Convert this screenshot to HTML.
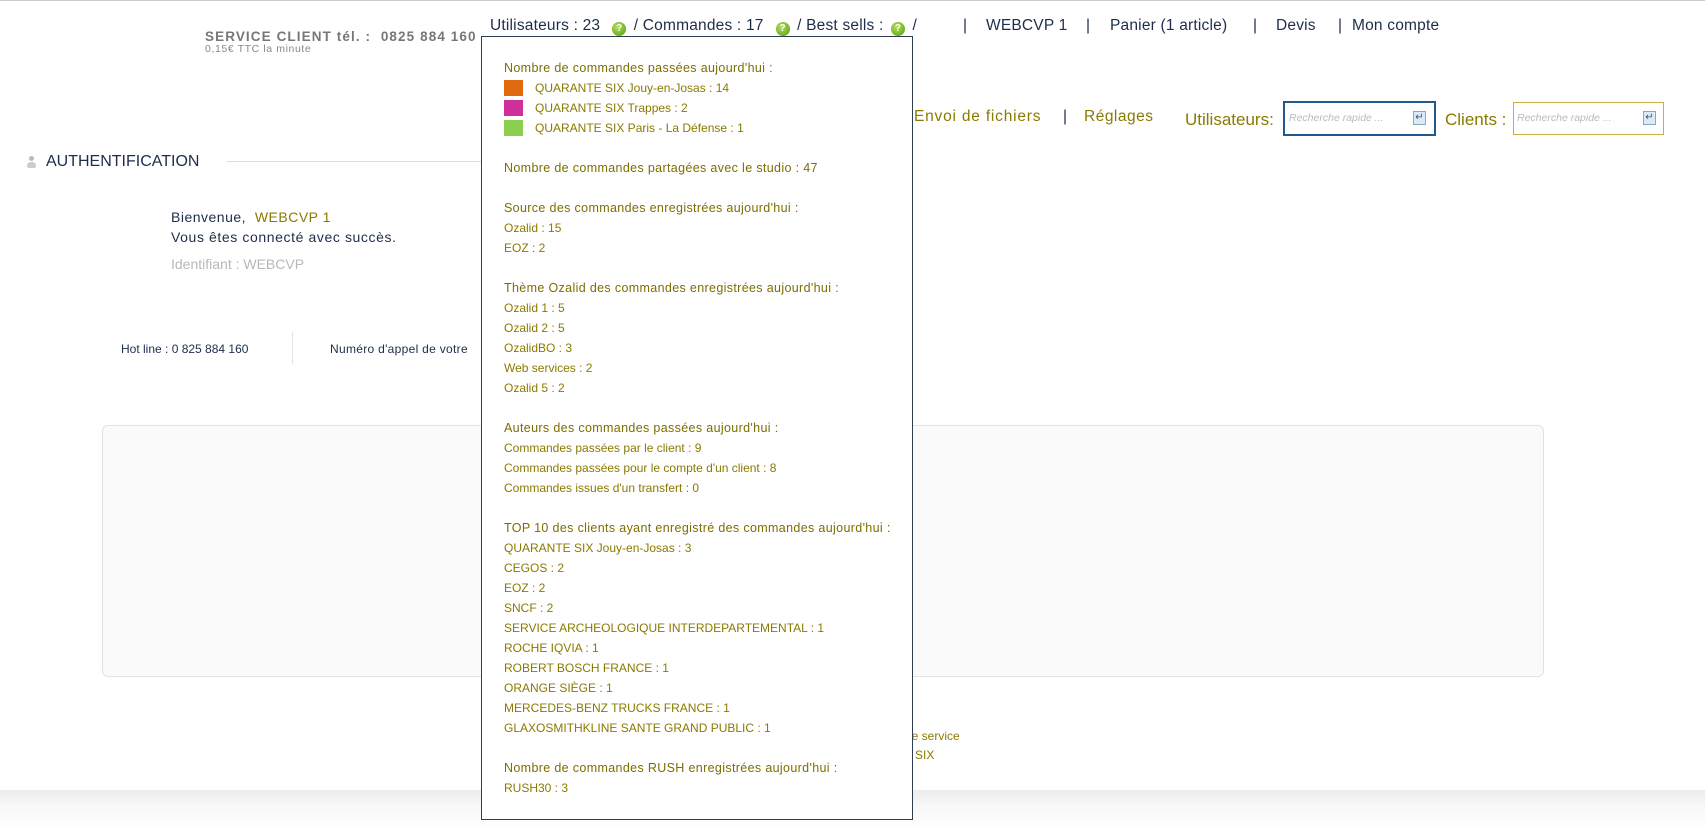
<!DOCTYPE html>
<html><head><meta charset="utf-8">
<style>
*{margin:0;padding:0;box-sizing:border-box}
body{width:1705px;height:831px;overflow:hidden;background:#fff;font-family:"Liberation Sans",sans-serif;position:relative;color:#1e2d4a}
.a{position:absolute;white-space:nowrap}
.ol{color:#8a7a00}
.nav{font-size:15.5px;top:17px;color:#1e2d4a;letter-spacing:0.2px}
#pop{position:absolute;left:481px;top:36px;width:432px;height:784px;border:1px solid #2c3e50;background:#fff;z-index:5}
#pop .l{position:absolute;left:22px;font-size:12px;color:#8a7a00;white-space:nowrap;line-height:14px}
#pop .h{font-size:12.5px;color:#7d6e00;letter-spacing:0.35px}
.sw{position:absolute;left:22px;width:19px;height:16px}
.q{display:inline-block;width:14px;height:14px;border-radius:50%;background:radial-gradient(circle at 40% 35%,#b6e05a,#4f9a10);color:#fff;font-size:10px;line-height:14px;text-align:center;font-weight:bold;vertical-align:-1px;margin:0 3px}
</style></head><body>
<div class="a" style="left:0;top:0;width:1705px;height:1px;background:#ccc"></div>

<div class="a" style="left:205px;top:29px;font-size:13.5px;font-weight:bold;color:#777;letter-spacing:1.1px">SERVICE CLIENT tél. :&nbsp; 0825 884 160</div>
<div class="a" style="left:205px;top:43px;font-size:10.5px;color:#888;letter-spacing:0.6px">0,15€ TTC la minute</div>

<div class="a nav" style="left:490px">Utilisateurs : 23 &nbsp;<span class="q">?</span> / Commandes : 17 &nbsp;<span class="q">?</span> / Best sells : <span class="q">?</span> /</div>
<div class="a nav" style="left:963px">|</div>
<div class="a nav" style="left:986px">WEBCVP 1</div>
<div class="a nav" style="left:1086px">|</div>
<div class="a nav ol" style="left:1110px">Panier (1 article)</div>
<div class="a nav" style="left:1253px">|</div>
<div class="a nav ol" style="left:1276px">Devis</div>
<div class="a nav" style="left:1338px">|</div>
<div class="a nav ol" style="left:1352px">Mon compte</div>

<div class="a ol" style="left:914px;top:108px;font-size:15.5px;letter-spacing:0.8px">Envoi de fichiers</div>
<div class="a" style="left:1063px;top:108px;font-size:15.5px">|</div>
<div class="a ol" style="left:1084px;top:108px;font-size:15.5px;letter-spacing:0.5px">Réglages</div>
<div class="a ol" style="left:1185px;top:110px;font-size:17px">Utilisateurs:</div>
<div class="a" style="left:1283px;top:101px;width:153px;height:35px;border:2px solid #1f5a8a;background:#fff">
 <span style="position:absolute;left:4px;top:9px;font-size:10.5px;font-style:italic;color:#bbb">Recherche rapide ...</span>
 <span style="position:absolute;right:8px;top:8px;width:13px;height:14px;background:#dbe8f5;border:1px solid #8ab;font-size:10px;line-height:12px;text-align:center;color:#357">↵</span></div>
<div class="a ol" style="left:1445px;top:110px;font-size:17px">Clients :</div>
<div class="a" style="left:1513px;top:102px;width:151px;height:33px;border:1px solid #c8b040;background:#fff">
 <span style="position:absolute;left:3px;top:9px;font-size:10.5px;font-style:italic;color:#bbb">Recherche rapide ...</span>
 <span style="position:absolute;right:7px;top:8px;width:13px;height:14px;background:#dbe8f5;border:1px solid #8ab;font-size:10px;line-height:12px;text-align:center;color:#357">↵</span></div>

<div class="a" style="left:27px;top:156px;width:9px;height:12px"><div style="width:5px;height:5px;border-radius:50%;background:#bbb;margin:0 auto"></div><div style="width:9px;height:6px;border-radius:4px 4px 2px 2px;background:#ccc;margin-top:1px"></div></div>
<div class="a" style="left:46px;top:153px;font-size:16px;color:#1e2d4a">AUTHENTIFICATION</div>
<div class="a" style="left:227px;top:161px;width:254px;height:1px;background:#ddd"></div>

<div class="a" style="left:171px;top:209px;font-size:14px;letter-spacing:0.5px">Bienvenue, &nbsp;<span class="ol">WEBCVP 1</span></div>
<div class="a" style="left:171px;top:229px;font-size:14px;letter-spacing:0.6px">Vous êtes connecté avec succès.</div>
<div class="a" style="left:171px;top:256px;font-size:14px;color:#b8b8b8">Identifiant : WEBCVP</div>

<div class="a" style="left:121px;top:342px;font-size:12px">Hot line : 0 825 884 160</div>
<div class="a" style="left:292px;top:332px;width:1px;height:32px;background:#e4e4e4"></div>
<div class="a" style="left:330px;top:342px;font-size:12px;letter-spacing:0.3px">Numéro d'appel de votre</div>

<div class="a" style="left:102px;top:425px;width:1442px;height:252px;background:#fafafa;border:1px solid #e2e2e2;border-radius:6px"></div>

<div class="a ol" style="left:905px;top:729px;font-size:12px">de service</div>
<div class="a ol" style="left:905px;top:748px;font-size:12px">&nbsp;&nbsp; SIX</div>

<div class="a" style="left:0;top:790px;width:1705px;height:41px;background:linear-gradient(#ececec,#f8f8f8 40%,#fff)"></div>

<div id="pop">
 <div class="l h" style="top:24px">Nombre de commandes passées aujourd'hui :</div>
 <div class="sw" style="top:43px;background:#e06a10"></div><div class="l" style="left:53px;top:44px">QUARANTE SIX Jouy-en-Josas : 14</div>
 <div class="sw" style="top:63px;background:#d0309a"></div><div class="l" style="left:53px;top:64px">QUARANTE SIX Trappes : 2</div>
 <div class="sw" style="top:83px;background:#8ccf50"></div><div class="l" style="left:53px;top:84px">QUARANTE SIX Paris - La Défense : 1</div>
 <div class="l h" style="top:124px">Nombre de commandes partagées avec le studio : 47</div>
 <div class="l h" style="top:164px">Source des commandes enregistrées aujourd'hui :</div>
 <div class="l" style="top:184px">Ozalid : 15</div>
 <div class="l" style="top:204px">EOZ : 2</div>
 <div class="l h" style="top:244px">Thème Ozalid des commandes enregistrées aujourd'hui :</div>
 <div class="l" style="top:264px">Ozalid 1 : 5</div>
 <div class="l" style="top:284px">Ozalid 2 : 5</div>
 <div class="l" style="top:304px">OzalidBO : 3</div>
 <div class="l" style="top:324px">Web services : 2</div>
 <div class="l" style="top:344px">Ozalid 5 : 2</div>
 <div class="l h" style="top:384px">Auteurs des commandes passées aujourd'hui :</div>
 <div class="l" style="top:404px">Commandes passées par le client : 9</div>
 <div class="l" style="top:424px">Commandes passées pour le compte d'un client : 8</div>
 <div class="l" style="top:444px">Commandes issues d'un transfert : 0</div>
 <div class="l h" style="top:484px">TOP 10 des clients ayant enregistré des commandes aujourd'hui :</div>
 <div class="l" style="top:504px">QUARANTE SIX Jouy-en-Josas : 3</div>
 <div class="l" style="top:524px">CEGOS : 2</div>
 <div class="l" style="top:544px">EOZ : 2</div>
 <div class="l" style="top:564px">SNCF : 2</div>
 <div class="l" style="top:584px">SERVICE ARCHEOLOGIQUE INTERDEPARTEMENTAL : 1</div>
 <div class="l" style="top:604px">ROCHE IQVIA : 1</div>
 <div class="l" style="top:624px">ROBERT BOSCH FRANCE : 1</div>
 <div class="l" style="top:644px">ORANGE SIÈGE : 1</div>
 <div class="l" style="top:664px">MERCEDES-BENZ TRUCKS FRANCE : 1</div>
 <div class="l" style="top:684px">GLAXOSMITHKLINE SANTE GRAND PUBLIC : 1</div>
 <div class="l h" style="top:724px">Nombre de commandes RUSH enregistrées aujourd'hui :</div>
 <div class="l" style="top:744px">RUSH30 : 3</div>
</div>
</body></html>
